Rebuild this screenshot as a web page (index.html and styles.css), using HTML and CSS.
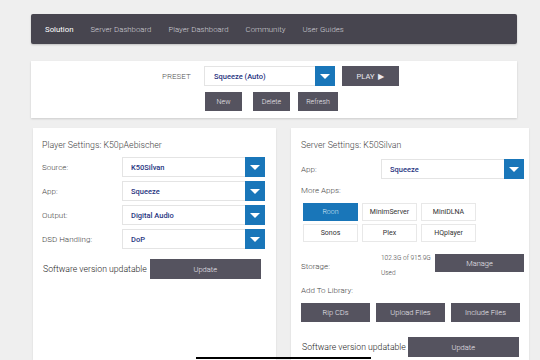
FILE: index.html
```html
<!DOCTYPE html>
<html lang="en">
<head>
    <meta charset="UTF-8">
    <title>Solution</title>
    <link rel="stylesheet" href="styles.css">
</head>
<body>

<nav class="navbar">
    <a class="nav-link active">Solution</a>
    <a class="nav-link">Server Dashboard</a>
    <a class="nav-link">Player Dashboard</a>
    <a class="nav-link">Community</a>
    <a class="nav-link">User Guides</a>
</nav>

<div class="preset-card">
    <div class="preset-row">
        <span class="preset-label">PRESET</span>
        <div class="select preset-select">
            <span class="select-value">Squeeze (Auto)</span>
            <span class="select-arrow"></span>
        </div>
        <button class="btn play-btn">PLAY<span class="play-icon">&#9654;</span></button>
    </div>
    <div class="preset-actions">
        <button class="btn btn-new">New</button>
        <button class="btn btn-delete">Delete</button>
        <button class="btn btn-refresh">Refresh</button>
    </div>
</div>

<div class="columns">
    <div class="card player-card">
        <div class="card-title">Player Settings: K50pAebischer</div>

        <div class="form-row">
            <label>Source:</label>
            <div class="select"><span class="select-value">K50Silvan</span><span class="select-arrow"></span></div>
        </div>
        <div class="form-row">
            <label>App:</label>
            <div class="select"><span class="select-value">Squeeze</span><span class="select-arrow"></span></div>
        </div>
        <div class="form-row">
            <label>Output:</label>
            <div class="select"><span class="select-value">Digital Audio</span><span class="select-arrow"></span></div>
        </div>
        <div class="form-row">
            <label>DSD Handling:</label>
            <div class="select"><span class="select-value">DoP</span><span class="select-arrow"></span></div>
        </div>

        <div class="update-row player-update">
            <span>Software version updatable</span>
            <button class="btn update-btn">Update</button>
        </div>
    </div>

    <div class="card server-card">
        <div class="card-title">Server Settings: K50Silvan</div>

        <div class="form-row server-app">
            <label>App:</label>
            <div class="select"><span class="select-value">Squeeze</span><span class="select-arrow"></span></div>
        </div>

        <div class="section-label">More Apps:</div>
        <div class="apps-grid">
            <button class="app-btn selected">Roon</button>
            <button class="app-btn">MinimServer</button>
            <button class="app-btn">MiniDLNA</button>
            <button class="app-btn">Sonos</button>
            <button class="app-btn">Plex</button>
            <button class="app-btn">HQplayer</button>
        </div>

        <div class="storage-row">
            <label>Storage:</label>
            <div class="storage-info">102.3G of 915.9G<br>Used</div>
            <button class="btn manage-btn">Manage</button>
        </div>

        <div class="section-label">Add To Library:</div>
        <div class="library-row">
            <button class="btn">Rip CDs</button>
            <button class="btn">Upload Files</button>
            <button class="btn">Include Files</button>
        </div>

        <div class="update-row server-update">
            <span>Software version updatable</span>
            <button class="btn update-btn">Update</button>
        </div>
    </div>
</div>

<div class="bottom-line"></div>

</body>
</html>
```

FILE: styles.css
```css
body { margin: 0; padding: 14px 0 0 31px; background: #efefef; font-family: Roboto, "Liberation Sans", sans-serif; color: #555; overflow: hidden; height: 346px; }
button { font-family: inherit; border: none; cursor: pointer; padding: 0; }

.navbar {
    width: 486px; height: 30px; box-sizing: border-box; background: #47454f; border-radius: 2px;
    display: flex; align-items: center; gap: 17px; padding-left: 14px;
    box-shadow: 0 1px 2px rgba(0,0,0,0.2);
}
.nav-link { font-size: 7.8px; font-weight: 300; color: #d0cfd6; }
.nav-link.active { color: #fff; font-weight: 400; }

.btn { background: #55535f; color: #eceaf0; font-size: 7.5px; font-weight: 300; }

.select {
    display: flex; height: 20px; box-sizing: border-box; width: 143px;
    border: 1px solid #e4e4e4; background: #fff;
}
.select-value { flex: 1; font-size: 7.5px; font-weight: 500; color: #28357f; padding-left: 8px; display: flex; align-items: center; }
.select-arrow { width: 20px; margin: -1px -1px -1px 0; background: #1976b9; position: relative; }
.select-arrow::after {
    content: ""; position: absolute; left: 50%; top: 50%; margin: -2px 0 0 -5px;
    border-left: 5px solid transparent; border-right: 5px solid transparent; border-top: 5px solid #fff;
}

.preset-card {
    width: 486px; box-sizing: border-box; margin-top: 17px; background: #fff;
    padding: 5px 0 7px 131px; box-shadow: 0 1px 2px rgba(0,0,0,0.15);
}
.preset-row { display: flex; align-items: center; }
.preset-label { font-size: 8px; font-weight: 300; color: #555; width: 31px; margin-right: 11px; }
.preset-select { width: 131px; }
.preset-select .select-value { padding-left: 9px; }
.play-btn { margin-left: 7px; width: 57px; height: 20px; font-size: 7.5px; font-weight: 400; }
.play-icon { margin-left: 4px; font-size: 8px; }
.preset-actions { display: flex; gap: 8px; margin-top: 6px; padding-left: 43px; }
.preset-actions .btn { height: 19px; font-size: 7px; }
.btn-new { width: 37px; }
.btn-delete { width: 37px; margin-left: 3px; }
.btn-refresh { width: 40px; }

.columns { display: flex; gap: 15px; margin-top: 10px; margin-left: 2px; }
.card { background: #fff; box-sizing: border-box; height: 232px; box-shadow: 0 1px 2px rgba(0,0,0,0.1); padding-top: 12px; }
.player-card { width: 243px; padding-left: 9px; }
.server-card { width: 238px; padding-left: 10px; }
.card-title { font-size: 8.8px; font-weight: 300; color: #444; margin-bottom: 6px; height: 11px; }

.form-row { display: flex; align-items: center; margin-bottom: 4px; }
.form-row label { width: 80px; font-size: 8px; font-weight: 300; color: #444; }
.server-app { margin-top: 8px; margin-bottom: 0; }

.update-row { display: flex; align-items: center; font-size: 8.7px; font-weight: 300; color: #222; }
.update-btn { width: 111px; height: 20px; font-size: 7.5px; }
.player-update { margin-top: 10px; padding-left: 1px; }
.player-update .update-btn { margin-left: 3px; }
.server-update { margin-top: 15px; padding-left: 1px; }
.server-update .update-btn { margin-left: 2px; }

.section-label { font-size: 8px; font-weight: 300; color: #444; margin-top: 7px; }
.apps-grid { display: grid; grid-template-columns: repeat(3, 55px); gap: 3px 4px; margin: 8px 0 0 2px; }
.app-btn { height: 18px; background: #fff; border: 1px solid #e8e8e8; font-size: 7px; color: #333; }
.app-btn.selected { background: #1976b9; border-color: #1976b9; color: #d6e6f4; font-weight: 300; }

.storage-row { display: flex; align-items: center; margin-top: 9px; margin-bottom: 5px; }
.storage-row label { width: 80px; font-size: 8px; font-weight: 300; color: #444; }
.storage-info { width: 54px; font-size: 6.5px; font-weight: 300; line-height: 15px; color: #444; }
.manage-btn { width: 89px; height: 18px; margin-top: -6px; }
.storage-row + .section-label { margin-top: 0; }

.library-row { display: flex; gap: 6px; margin-top: 8px; }
.library-row .btn { width: 69px; height: 19px; font-size: 7.5px; }

.bottom-line { position: absolute; left: 196px; top: 357px; width: 175px; height: 2px; background: #000; }
```
